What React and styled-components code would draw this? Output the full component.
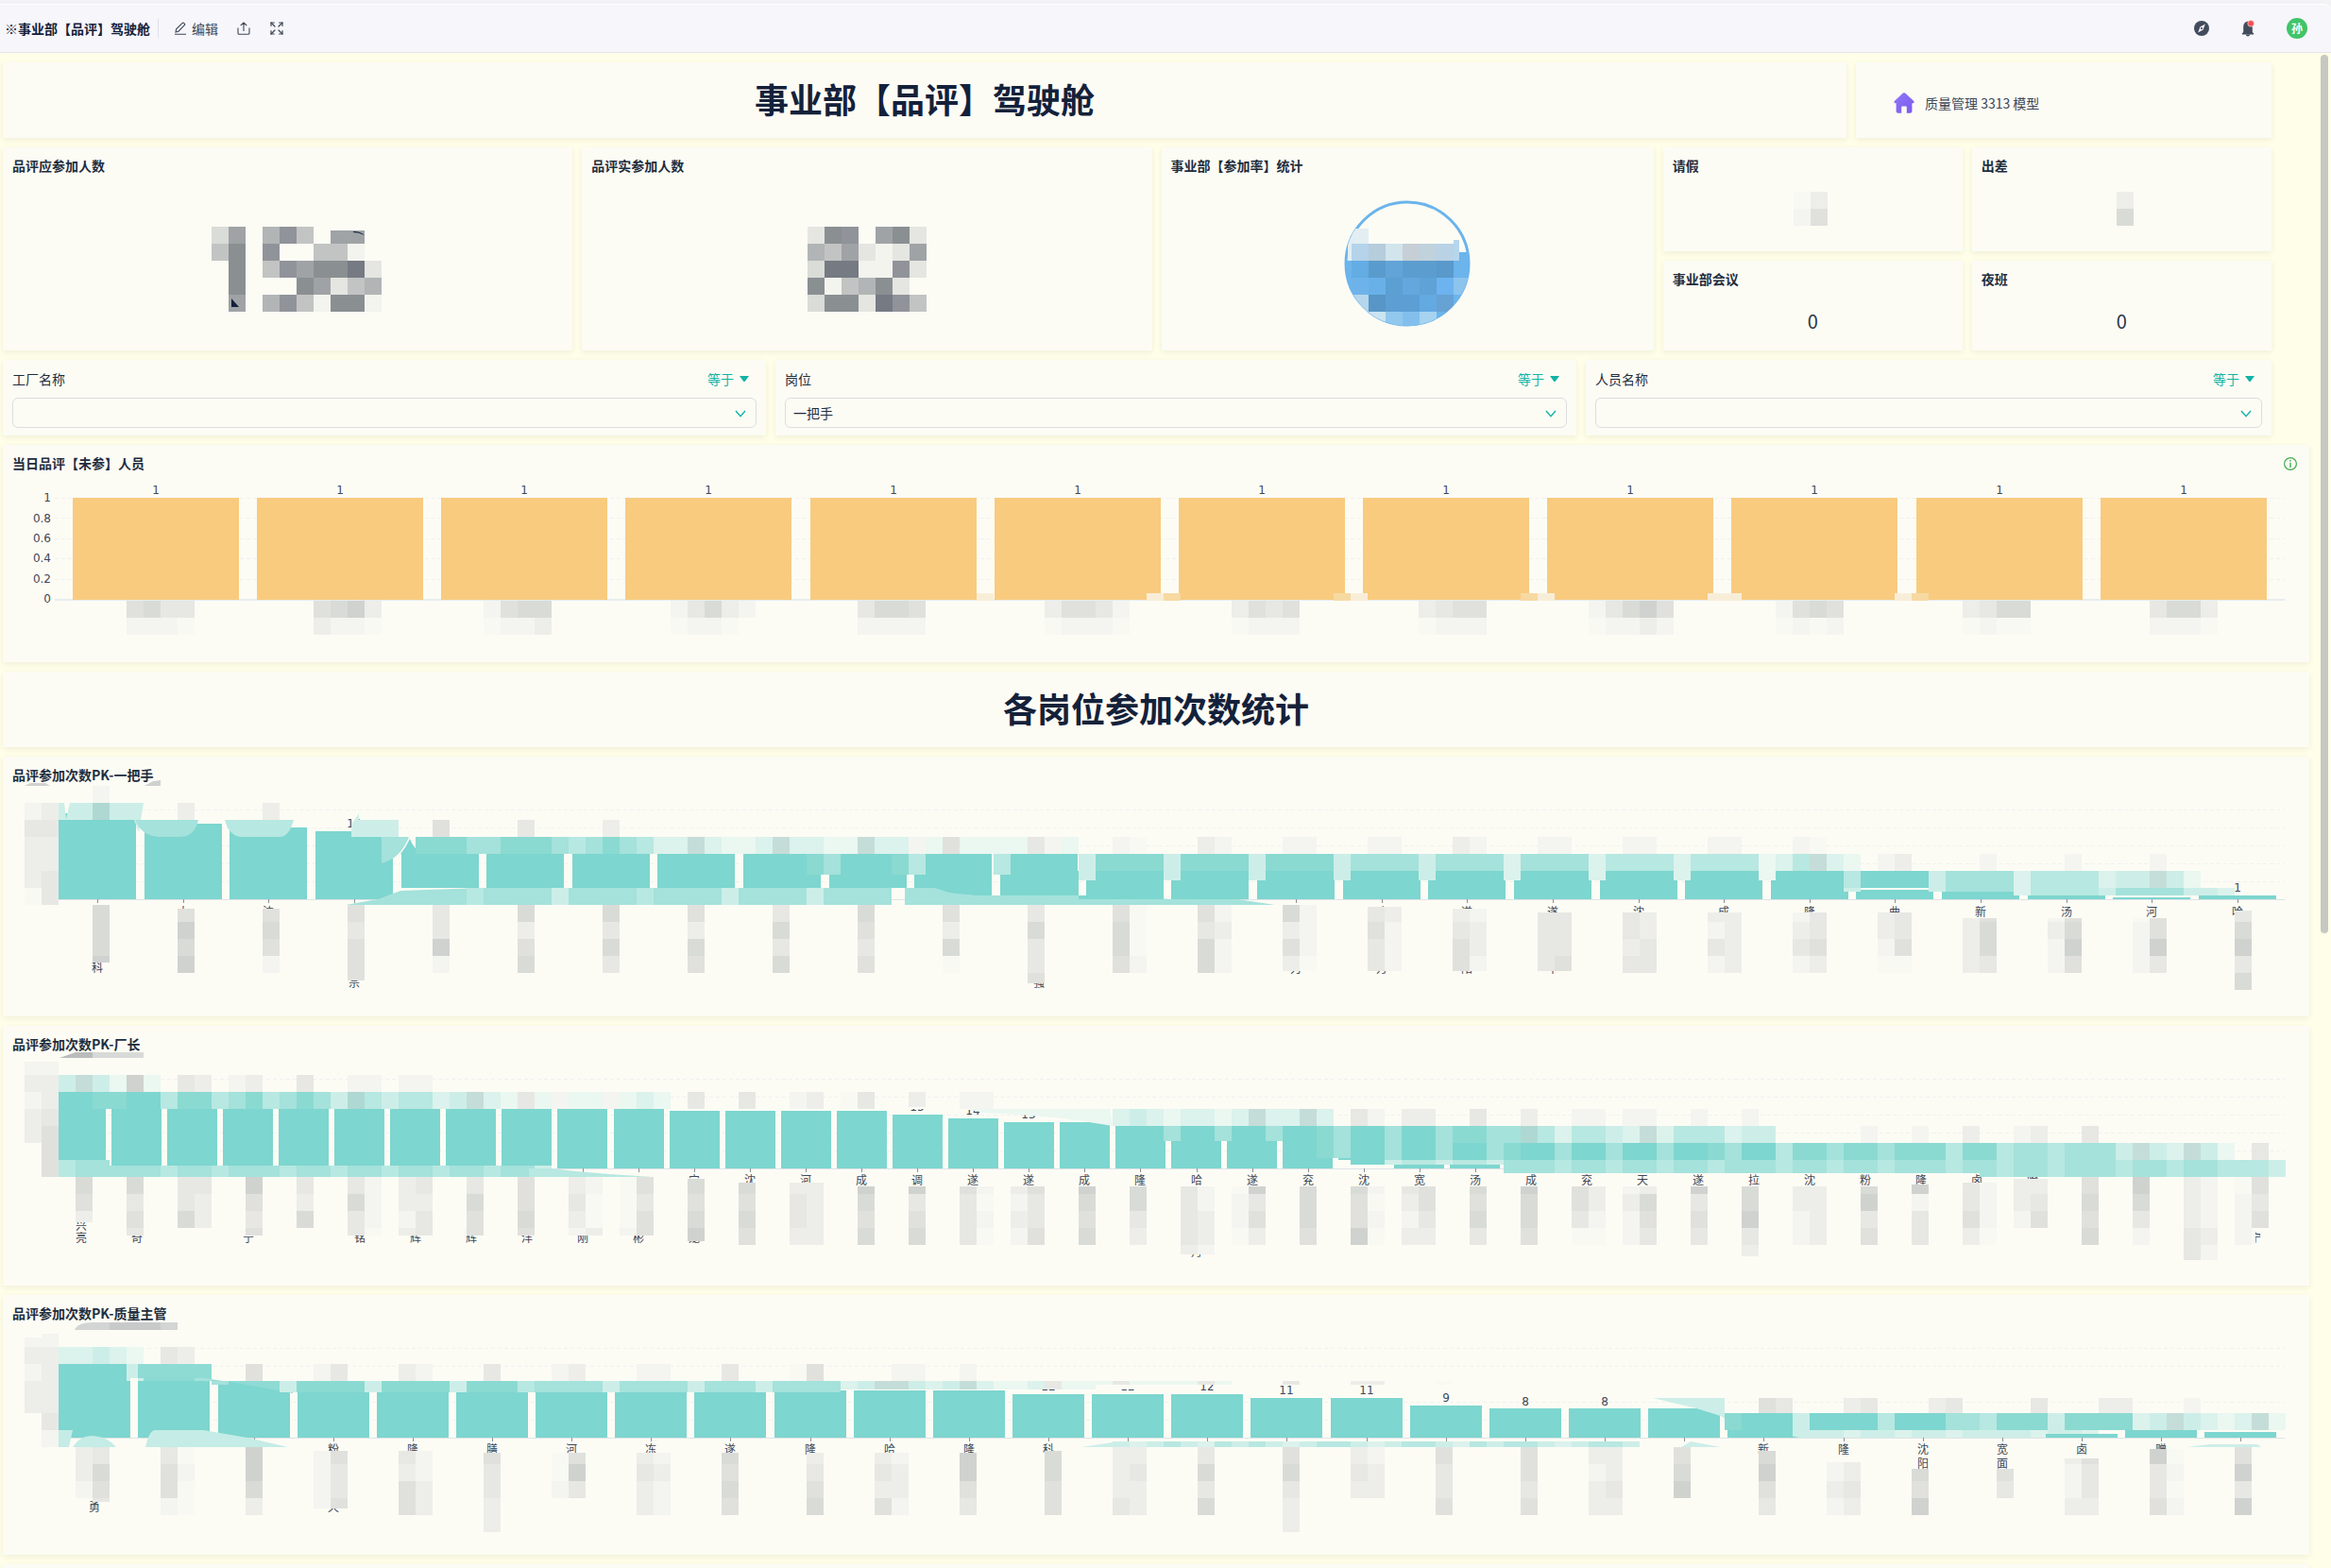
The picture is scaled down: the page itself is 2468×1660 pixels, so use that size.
import React from "react";
import styled, { createGlobalStyle } from "styled-components";
import { Expand } from "lucide-react";

const cjk = '"Noto Sans CJK SC", "Noto Sans", sans-serif';
const chartFont = '"DejaVu Sans", "Noto Sans CJK SC", sans-serif';

const GlobalStyle = createGlobalStyle`
  * { box-sizing: border-box; }
  body { margin: 0; background: #f3f3f5; font-family: ${cjk}; font-size: 14px; line-height: 20px; color: #1f2d3d; }
  h1, h2, h3, p { margin: 0; }
`;

const Page = styled.div`
  display: flex;
  flex-direction: column;
  height: 100vh;
  padding-top: 4px;
`;

const Header = styled.header`
  display: flex;
  align-items: center;
  justify-content: space-between;
  flex: none;
  height: 52px;
  padding: 0 25px 1px 5px;
  background: #f6f6fb;
  border-top: 1px solid #ffffff;
  border-bottom: 1px solid #e3e4ee;
  border-radius: 0 8px 0 0;
`;

const HeaderGroup = styled.div`
  display: flex;
  align-items: center;
  gap: ${(p) => p.$gap}px;
`;

const PageName = styled.h1`
  font-size: 14px;
  line-height: 20px;
  font-weight: 700;
  color: #14213a;
  padding-right: 8px;
  border-right: 1px solid #dfe1e8;
`;

const ToolButton = styled.button`
  display: flex;
  align-items: center;
  gap: 5px;
  padding: 0;
  border: 0;
  background: none;
  font: inherit;
  color: #3d4757;
  cursor: pointer;
`;

const Avatar = styled.span`
  display: grid;
  place-items: center;
  width: 22px;
  height: 22px;
  border-radius: 50%;
  background: #41c46b;
  color: #fff;
  font-size: 12px;
  line-height: 22px;
  font-weight: 700;
`;

const Viewport = styled.div`
  display: flex;
  flex: 1;
  min-height: 0;
  background: #fffee8;
`;

const Board = styled.main`
  display: flex;
  flex-direction: column;
  gap: 10px;
  flex: 1;
  min-width: 0;
  padding: 10px 12px 10px 3px;
  overflow-y: auto;
  scrollbar-width: none;
`;

const ScrollThumb = styled.div`
  flex: none;
  width: 8px;
  height: 58%;
  margin: 2px 3px 0 0;
  border-radius: 4px;
  background: #c6c8c2;
`;

const Row = styled.div`
  display: grid;
  grid-template-columns: ${(p) => p.$columns};
  gap: 10px;
  flex: none;
  margin-right: 40px;
`;

const Card = styled.section`
  display: flex;
  flex-direction: column;
  flex: none;
  min-width: 0;
  padding: 10px;
  min-height: ${(p) => p.$minHeight || 0}px;
  grid-row: ${(p) => (p.$tall ? "span 2" : "auto")};
  background: #fcfcf5;
  box-shadow: 0 2px 6px rgba(60, 50, 20, 0.08);
`;

const Banner = styled(Card)`
  justify-content: center;
  align-items: center;
  height: 80px;
  padding: 7px 10px 12px;
`;

const BannerTitle = styled.h2`
  font-size: 36px;
  line-height: 48px;
  font-weight: 700;
  color: #14213a;
`;

const LinkCard = styled(Card)`
  flex-direction: row;
  align-items: center;
  padding: 6px 40px 0;
`;

const ModelLink = styled.a`
  display: flex;
  align-items: center;
  gap: 11px;
  color: #3d4757;
  text-decoration: none;
`;

const CardHead = styled.div`
  display: flex;
  align-items: flex-start;
  justify-content: space-between;
  height: 20px;
  padding: 0 3px 0 0;
  svg { margin-top: 3px; }
`;

const CardTitle = styled.h3`
  font-size: 14px;
  line-height: 18px;
  font-weight: 700;
  color: #1f2d3d;
`;

const CardBody = styled.div`
  display: flex;
  flex: 1;
  align-items: center;
  justify-content: center;
`;

const Count = styled.p`
  padding-top: 12px;
  font-size: 20px;
  line-height: 28px;
  color: #2b3648;
`;

const FilterCard = styled(Card)`
  gap: 10px;
  padding-bottom: 8px;
`;

const FilterHead = styled.div`
  display: flex;
  justify-content: space-between;
  padding-right: 8px;
`;

const Operator = styled(ToolButton)`
  gap: 6px;
  color: #12b3a6;
`;

const SelectWrap = styled.div`
  position: relative;
  svg { position: absolute; right: 11px; top: 13px; pointer-events: none; }
`;

const Select = styled.select`
  display: block;
  width: 100%;
  height: 32px;
  padding: 0 30px 0 8px;
  border: 1px solid #dcdde0;
  border-radius: 6px;
  background: transparent;
  appearance: none;
  font: inherit;
  color: #1f2d3d;
`;

const ChartSvg = styled.svg`
  display: block;
  width: 100%;
  height: auto;
  overflow: visible;
  font-family: ${chartFont};
  font-size: 12px;
  fill: #3d4757;
`;

const Glyph = styled.svg`
  display: block;
  flex: none;
`;

/* ---------- pixelated overlays ---------- */

const palette = {
  a: "#f9f9f3", b: "#f4f5f0", c: "#edeee9", d: "#e7e8e4", e: "#e0e1dd", f: "#d9dbd7", g: "#d0d2cf",
  t: "#7dd6cf", u: "#8adad2", v: "#a4e2db", w: "#b7e8e1", x: "#cdeee8", y: "#dcf2ec", z: "#ebf7f1",
  m: "#c5ddd8", n: "#afd8d3",
  1: "#f3f4ee", 2: "#e5e6e1", 3: "#d9dcd7", 4: "#c2c4c3", 5: "#b1b5b6", 6: "#9fa3a6", 7: "#91939a", 8: "#8a8f92", 9: "#757a83",
  o: "#f8eed8", p: "#f7d9a2",
};
const CELL = 18;
const colX = (k) => 8 + CELL * k;

function Run({ y, from, cells, h = CELL, x0 }) {
  const left = x0 === undefined ? colX(from) : x0;
  return [...cells].map((c, i) =>
    c === "." ? null : (
      <rect key={i} x={left + i * CELL} y={y} width={CELL} height={h} fill={palette[c]} shapeRendering="crispEdges" />
    )
  );
}

function Stack({ k, rows, top, cells, limit = 260 }) {
  let first = 0;
  while (first < rows.length - 1 && rows[first + 1] <= top) first += 1;
  return [...cells].map((c, i) => {
    const start = i === 0 ? top : rows[first + i];
    const end = Math.min(limit, rows[first + i + 1] ?? rows[first + i] + CELL);
    return (
      <rect key={i} x={colX(k)} y={start} width={CELL} height={Math.max(0, end - start)} fill={palette[c]} shapeRendering="crispEdges" />
    );
  });
}

function Stacks({ rows, items }) {
  return items.map(([k, top, cells, limit], i) => <Stack key={i} k={k} rows={rows} top={top} cells={cells} limit={limit} />);
}

/* ---------- chart parts ---------- */

function Bars({ first, pitch, width, tops, base, fill }) {
  return tops.map((t, i) => {
    const [top, bottom] = Array.isArray(t) ? t : [t, base];
    const left = Math.round(first + i * pitch - width / 2);
    return <rect key={i} x={left} y={top} width={width} height={bottom - top} fill={fill} shapeRendering="crispEdges" />;
  });
}

function Grid({ lines }) {
  return lines.map((y) => (
    <line key={y} x1="58" x2="2419" y1={y} y2={y} stroke="#f1f1f1" strokeDasharray="4 3" shapeRendering="crispEdges" />
  ));
}

function Axis({ y, first, pitch, count }) {
  return (
    <g shapeRendering="crispEdges">
      <rect x="58" y={y} width="2361" height="1" fill="#dfe3e6" />
      {Array.from({ length: count }, (_, i) => (
        <rect key={i} x={Math.round(first + i * pitch)} y={y} width="1" height="4" fill="#8b9098" />
      ))}
    </g>
  );
}

function Labels({ first, pitch, items }) {
  return items.map(([i, text, y], n) => (
    <text key={n} x={Math.round(first + i * pitch)} y={y} textAnchor="middle">{text}</text>
  ));
}

const TEAL = "#7dd6cf";
const BG = "#fcfcf5";

function AbsentChart() {
  const first = 165;
  const pitch = 195.15;
  const names = [
    [7, "efdd", "bbba"], [18, "efgc", "cbba"], [28, "beff", "abbc"], [39, "bdfcb", "abba."], [50, "dffe", "bbbb"],
    [61, "ceedb", "abbba"], [72, "cede", "abbb"], [83, "cdee", "abbb"], [93, "bdfge", "abbcb"], [104, "befe", "abab"],
    [115, "cdff", "abaa"], [126, "dffc", "bbba"],
  ];
  return (
    <ChartSvg viewBox="13 30 2422 190">
      <Grid lines={[56, 77, 99, 120, 142]} />
      <rect x="58" y="163" width="2361" height="2" fill="#e8ecee" />
      <Bars first={first} pitch={pitch} width={176} tops={Array(12).fill(56)} base={164} fill="#f8cb7f" />
      {["1", "0.8", "0.6", "0.4", "0.2", "0"].map((t, i) => (
        <text key={t} x="54" y={[60, 82, 103, 124, 146, 167][i]} textAnchor="end">{t}</text>
      ))}
      <Labels first={first} pitch={pitch} items={Array.from({ length: 12 }, (_, i) => [i, "1", 52])} />
      {[[57, "o"], [67, "op"], [78, "po"], [89, "po"], [100, "oo"], [111, "op"]].map(([k, c]) => (
        <Run key={k} y={157} from={k} cells={c} h={8} />
      ))}
      {names.map(([k, a, b]) => (
        <g key={k}>
          <Run y={165} from={k} cells={a} />
          <Run y={183} from={k} cells={b} />
        </g>
      ))}
    </ChartSvg>
  );
}

function LeaderChart() {
  const first = 103;
  const pitch = 90.64;
  const rows = [31, 49, 67, 85, 103, 121, 139, 157, 175, 193, 211, 229];
  const tops = [60, 71, 75, 79, ...Array(6).fill([103, 139]), [103, 147], [103, 148], ...Array(9).fill(121), 141, 143, 147, 149, 147];
  const stacks = [
    [1, 49, "bdccca"], [2, 49, "cdccdd"], [5, 31, "b"],
    [5, 157, "fffg", 218], [10, 161, "egfg"], [15, 161, "efeb"], [20, 157, "edeee", 237], [25, 157, "ddgb"], [30, 157, "fcef"],
    [35, 157, "fdfd"], [40, 157, "ecfe"], [45, 157, "dfdf"], [50, 157, "fede"], [55, 157, "ecfa"], [60, 157, "dfdde", 240],
    [65, 157, "effe"], [66, 157, "aaab"], [70, 157, "edff"], [71, 157, "bcbb"], [75, 157, "fcec", 227], [76, 157, "bbba", 227],
    [80, 159, "dedd", 227], [81, 159, "cbbb", 227], [85, 161, "cdee", 227], [86, 161, "bccb", 227], [90, 165, "dddd", 227], [91, 165, "ddde", 227],
    [95, 165, "ddcd"], [96, 165, "ccdd"], [100, 165, "cbdb"], [101, 165, "cccc"], [105, 165, "bcdb"], [106, 165, "ddec"],
    [110, 165, "ccba"], [111, 165, "ddea"], [115, 171, "cccc"], [116, 171, "effd"], [120, 171, "bcbb"], [121, 171, "efge"],
    [125, 171, "abbb"], [126, 171, "eegd"], [131, 163, "dfgdf"],
  ];
  return (
    <ChartSvg viewBox="13 30 2422 235">
      <Grid lines={[56, 75, 94, 113, 132]} />
      <Axis y={151} first={first} pitch={pitch} count={26} />
      <Bars first={first} pitch={pitch} width={82} tops={tops} base={151} fill={TEAL} />
      <path d="M26 31 L32 28 H48 L53 31Z M153 31 L162 26 L170 25 V31Z" fill="#cfd1d1" />
      <Labels first={first} pitch={pitch} items={[
        [1, "太", 169], [2, "沈", 169],
        [15, "隆", 169], [16, "遂", 169], [17, "遂", 169], [18, "沈", 169], [19, "成", 169], [20, "隆", 169], [21, "曲", 169],
        [22, "新", 169], [23, "汤", 169], [24, "河", 169], [25, "哈", 169], [25, "1", 143], [3, "18", 75],
        [0, "科", 228], [3, "宗", 244], [11, "强", 244], [14, "力", 229], [15, "万", 229], [16, "阳", 229], [17, "中", 229],
      ]} />
      <path d="M62 49 H68 L70 66 L74 49 H152 L147 80 L142 67 H62Z" fill={palette.x} />
      <rect x="98" y="49" width="18" height="18" fill={palette.n} />
      <path d="M143 67 H210 Q206 85 190 85 H168 Q150 84 143 67Z" fill={palette.v} />
      <path d="M238 67 H311 Q306 85 296 85 H258 Q243 86 238 67Z" fill={palette.w} />
      <path d="M372 85 V72 L380 60 V67 H422 V85Z" fill={palette.x} />
      <path d="M404 85 H433 Q424 108 404 113Z" fill={palette.v} />
      <path d="M424 103 Q430 96 434 87 Q440 103 454 103Z" fill={TEAL} />
      <Run y={49} from={10} cells="c....c" />
      <Run y={67} from={25} cells="e....d....c" />
      <Run y={85} from={24} cells="uuuvvuuuvwvuvwyymyzzymyyzzmyybzezzzzdbz..ba...cb...bb...bb...cb...bb...bb...bb...ba" />
      <Run y={103} from={63} cells="xuuuuxuuuuxuuuuxvvvvxvvvvyvvvvywwwwywwwwzywmyz.bc....b....b....b" />
      <Run y={103} from={47} cells="uv...uw....w" h={22} />
      <Run y={121} from={63} cells="x....x....x....x....x....y....y....y....z" h={10} />
      <Run y={121} from={108} cells="wttttxvvvvywwwwyxxmxz" />
      <Run y={139} from={108} cells="x....xvvvv" h={4} />
      <Run y={139} from={118} cells="ywwww" h={8} />
      <Run y={139} from={123} cells="xvvvvxxy" h={8} />
      <path d="M366 157 L400 151 L424 142 L508 139 V157Z" fill={palette.v} />
      <Run y={139} from={27} cells="wvvvvxvvvvwvvvvxvvvvxvvvv" />
      <path d="M958 139 H990 L1005 144 L1035 147 H1160 L1200 151 H1310 L1350 157 H958Z" fill={palette.v} />
      <path d="M994 139 H1040 V147 L1012 145Z M1140 121 H1142 V151 H1240 L1170 147 H1140Z" fill={TEAL} />
      <Stacks rows={rows} items={stacks} />
    </ChartSvg>
  );
}

function ManagerChart() {
  const first = 85.5;
  const pitch = 59.05;
  const rows = [34, 52, 70, 88, 106, 124, 142, 160, 178, 196, 214, 232];
  const tops = [
    [70, 151], [70, 151], ...Array(8).fill(88), 87, 90, 90, 90, 90, 94, 98, 102, 102, 106, 106, 106, 106, [106, 142], 146, 146, 147, 149,
  ];
  const stacks = [
    [1, 38, "bcbcc"], [2, 38, "bccdeee"],
    [4, 160, "fec", 208], [7, 160, "fded", 222], [10, 160, "ddf"], [11, 160, "dcc"], [14, 160, "gede", 222], [17, 160, "dcf"],
    [20, 160, "dfdd", 222], [21, 160, "bbba", 222], [23, 160, "ccbc", 222], [24, 160, "dcdd", 222], [27, 160, "dfee", 222], [30, 160, "eefe", 222],
    [33, 160, "cdcb", 222], [34, 160, "baac", 222], [36, 160, "aaab", 222], [37, 160, "edee", 222], [40, 162, "fefg", 228], [43, 166, "fefe"],
    [46, 166, "cddc"], [47, 166, "cccc"], [50, 170, "gfef"], [53, 170, "gdef"], [56, 170, "eddd"], [57, 170, "baba"],
    [59, 170, "cbcb"], [60, 170, "edde"], [63, 170, "gfef"], [66, 170, "ffdc"],
    [69, 170, "ddddc", 242], [70, 170, "bbccb", 242], [72, 170, "abba"], [73, 170, "gdec"], [76, 170, "fffe"], [79, 170, "feeg"],
    [80, 170, "baba"], [82, 170, "dcbc"], [83, 170, "eedc"], [86, 170, "fefd"], [89, 170, "gffe"], [92, 170, "eeda"],
    [93, 170, "ccba"], [95, 170, "bcbb"], [96, 170, "cfed"], [99, 170, "gded"], [102, 170, "ffgdc", 244], [105, 170, "ccbb"],
    [106, 170, "cccc"], [109, 170, "fgde"], [112, 168, "gbdd"], [115, 166, "ddec"], [116, 166, "bbba"], [118, 162, "ccb"],
    [119, 162, "cde"], [122, 160, "efef"], [125, 160, "gfdb"], [128, 160, "cccdd", 248], [129, 160, "bbbcb", 248], [131, 160, "abbb"],
    [132, 160, "ede"],
  ];
  return (
    <ChartSvg viewBox="13 30 2422 235">
      <Grid lines={[56, 75, 94, 113, 132]} />
      <Axis y={151} first={first} pitch={pitch} count={40} />
      <Bars first={first} pitch={pitch} width={53} tops={tops} base={151} fill={TEAL} />
      <path d="M63 34 L80 28 H98 V34Z" fill="#b9bcbb" />
      <path d="M98 28 H152 V34 H98Z" fill="#d8dad8" />
      <Labels first={first} pitch={pitch} items={[
        [11, "宁", 168], [12, "沈", 168], [13, "河", 168], [14, "成", 168], [15, "调", 168], [16, "遂", 168], [17, "遂", 168],
        [18, "成", 168], [19, "隆", 168], [20, "哈", 168], [21, "遂", 168], [22, "兖", 168], [23, "沈", 168], [24, "宽", 168],
        [25, "汤", 168], [26, "成", 168], [27, "兖", 168], [28, "天", 168], [29, "遂", 168], [30, "拉", 168], [31, "沈", 168],
        [32, "粉", 168], [33, "隆", 168], [34, "卤", 168], [35, "哈", 168],
        [0, "兴", 216], [0, "亮", 229], [1, "奇", 229], [3, "宁", 229], [5, "铭", 229], [6, "辉", 229], [7, "辉", 229],
        [8, "洋", 229], [9, "刚", 229], [10, "彬", 229], [11, "龙", 229], [20, "丹", 244], [39, "宁", 229],
        [15, "15", 90], [16, "14", 94], [17, "13", 98],
      ]} />
      <rect x="955" y="76" width="34" height="10" fill={BG} />
      <rect x="1014" y="80" width="34" height="9" fill={BG} />
      <rect x="1073" y="84" width="34" height="10" fill={BG} />
      {[1, 3, 5, 6, 7, 8, 9, 10].map((i) => (
        <rect key={i} x={Math.round(first + i * pitch) - 8} y="216" width="16" height="6" fill={palette.a} />
      ))}
      <rect x="2376" y="214" width="12" height="18" fill={palette.a} />
      <Run y={52} from={3} cells="xmxz" />
      <Run y={52} from={7} cells="gz.dc.bc..d..bb.bb" />
      <Run y={70} from={3} cells="ttuuttwuuwvuwvuvxnwxwwyxmyzdzbzzbzyz.d..d..bc.ad..c..bb" />
      <rect x="962" y="86" width="18" height="2" fill={BG} />
      <path d="M1025 88 H1175 L1178 106 Q1110 94 1040 92Z" fill={palette.z} />
      <Run y={88} from={65} cells="yxyzyyzymyymy.db.cc..d..c..bb.bb..b..b" />
      <Run y={106} from={68} cells="v..v..v..uv" h={16} />
      <Run y={106} from={79} cells="ttvttvuuvvnwywwxymywwwyxx.....b..b..c..bc..d" />
      <Run y={122} from={77} cells="uv" />
      <Run y={124} from={79} cells="ttvttvttvuttvttvttvttuvttwuuvuuvuuuwuuwvvwvvvxmxymxz.d" />
      <Run y={142} from={79} cells="ttxwwxwwx" h={5} />
      <Run y={142} from={88} cells="vvvwvvwvvwvvwvvvwvvwvvwvvvwv" h={14} />
      <Run y={142} from={116} cells="vwvvwvvvwvvwvvwwwx" />
      <Run y={142} from={3} cells="wvv" />
      <Run y={148} from={6} cells="vvvwvvwvvvwvvwvvwvvwvvwvvx" h={12} />
      <path d="M584 151 L610 154 L645 157 L690 160 H560 V151Z" fill={palette.w} />
      <Stacks rows={rows} items={stacks} />
    </ChartSvg>
  );
}

function QualityChart() {
  const first = 100.2;
  const pitch = 84.15;
  const rows = [37, 55, 73, 91, 109, 125, 143, 161, 179, 197, 215, 233];
  const tops = [
    73, 73, 91, 103, 103, 103, 102, 102, 101, 101, 101, 101, 105, 105, 105, 109, 109, 117, 120, 120, 120, 127, 149, 149, 149, 147, 143, 145,
  ];
  const stacks = [
    [1, 45, "bcbcc"], [2, 41, "bccccdb"],
    [4, 161, "ccb"], [5, 161, "dfed", 219], [9, 161, "deeb"], [10, 161, "abaa"], [14, 161, "ggfc"], [18, 165, "bbbb", 226],
    [19, 165, "edde", 226], [23, 165, "dcee"], [24, 165, "bbcc"], [28, 167, "eddcc"], [32, 167, "aab"], [33, 167, "egd"],
    [37, 167, "cdcc"], [38, 167, "bcbb"], [42, 167, "fefe"], [47, 167, "cdef"], [51, 167, "cdce"], [52, 167, "bccb"],
    [56, 167, "gged"], [61, 165, "ffee"], [65, 161, "cccd"], [66, 161, "cdcc"], [70, 161, "dfdf"], [75, 161, "efdcc"],
    [79, 161, "cdc"], [80, 161, "bcc"], [84, 161, "edde"], [89, 161, "eede"], [93, 161, "cbcc"], [94, 161, "ccdc"],
    [98, 161, "efg"], [103, 165, "fged"], [107, 177, "bbcb"], [108, 177, "ccdc"], [112, 184, "feg"], [117, 184, "ed"],
    [121, 173, "cbbc"], [122, 173, "eddc"], [126, 163, "gdde"], [127, 163, "abab"], [131, 161, "egdg"],
  ];
  return (
    <ChartSvg viewBox="13 30 2422 235">
      <Grid lines={[56, 75, 113, 132]} />
      <Axis y={151} first={first} pitch={pitch} count={28} />
      <Bars first={first} pitch={pitch} width={76} tops={tops} base={151} fill={TEAL} />
      <path d="M79 37 Q82 29 98 29 H188 V37Z" fill="#d3d5d4" />
      <path d="M116 29 H170 V37 H116Z" fill="#c8caca" />
      <Labels first={first} pitch={pitch} items={[
        [3, "粉", 168], [4, "隆", 168], [5, "膳", 168], [6, "河", 168], [7, "冻", 168], [8, "遂", 168], [9, "隆", 168],
        [10, "哈", 168], [11, "隆", 168], [12, "科", 168], [21, "新", 168], [22, "隆", 168], [23, "沈", 168], [23, "阳", 183],
        [24, "宽", 168], [24, "面", 183], [25, "卤", 168], [26, "赠", 168], [0, "勇", 229], [3, "天", 229],
        [12, "12", 101], [13, "12", 101], [14, "12", 101], [15, "11", 105], [16, "11", 105], [17, "9", 113], [18, "8", 117], [19, "8", 117],
      ]} />
      <rect x="1098" y="91" width="36" height="9" fill={BG} />
      <rect x="1182" y="91" width="36" height="9" fill={BG} />
      <Run y={55} from={3} cells="yyxyz.dc" />
      <Run y={73} from={3} cells="ttttxuuuv" />
      <path d="M146 88 H215 L250 93 L310 104 V91 H224 V73 H146Z" fill="#8edbd4" />
      <rect x="138" y="88" width="8" height="63" fill={BG} />
      <Run y={73} from={14} cells="e...bd...cb...d...bc...bb...d...ae....bb..b" />
      <Run y={91} from={16} cells="xuuuuxuuuuxuuuwvvvvxvvvvxvvvxvvvv" h={12} />
      <Run y={91} from={49} cells="yxmmxyxmyzzydzz" h={9} />
      <Run y={91} from={64} cells="zdzzzzdz...d...cc...a" h={4} />
      <Run y={91} from={12} cells="v" h={4} />
      <path d="M1750 109 H1826 V125 H1850 V150 L1822 128 L1796 120Z" fill={palette.x} />
      <Run y={109} from={103} cells="ed...cd...cd....d...cc...b" h={16} />
      <Run y={125} from={101} cells="utttxttttwtttvvwuuuxuuuuyxmxyzymz" />
      <Run y={143} from={105} cells="xxxyxxyxxyxxxxyxxy" h={8} />
      <Bars first={first + 25 * pitch} pitch={pitch} width={76} tops={[147, 143, 145]} base={151} fill={TEAL} />
      <path d="M1866 143 L1905 151 H1830 V143Z" fill={TEAL} />
      <path d="M62 143 H77 L73 161 H62Z M77 161 Q84 149 98 149 Q114 150 123 161Z M154 161 Q158 143 164 143 H215 L262 151 L305 161Z" fill="#c5ece6" />
      <path d="M1145 161 L1178 156 V161Z" fill={palette.x} />
      <Run y={155} from={65} cells="xyxwxywxwxyxwwxyxwwxywxwwxyxwwx" h={6} />
      <path d="M1790 155 L1822 161 H1780Z M2315 161 L2340 158 H2390 L2394 161Z" fill={palette.x} />
      <Stacks rows={rows} items={stacks} />
    </ChartSvg>
  );
}

/* ---------- indicator drawings ---------- */

function PixelNumber({ lines, pad }) {
  return (
    <Glyph width={lines[0].length * CELL + pad} height="112" aria-hidden="true">
      {lines.map((cells, i) => <Run key={i} y={22 + i * CELL} x0={pad} cells={cells} />)}
      {pad > 0 && (
        <>
          <rect x="144" y="22" width="36" height="4" fill={BG} />
          <path d="M39 98 L47 107 H39Z M168 27 Q176 27 180 31 Q174 28 168 28Z" fill="#14213a" />
        </>
      )}
    </Glyph>
  );
}

const gaugeRows = [
  [8, 56, ["#b5d3ea", "#b6cddb", "#d2e4ec", "#c6cfd5", "#c0d2dc", "#bad2e6"]],
  [8, 74, ["#63ace4", "#5a9bcd", "#62a3d8", "#5c9dd0", "#5c9dd0", "#5999cb"]],
  [8, 92, ["#6db3ea", "#69b0e8", "#5b9fd3", "#64a7de", "#5fa2d5", "#6db3f0", "#8cc4ee"]],
  [8, 110, ["#b5d6ec", "#5796c6", "#5d9fd3", "#5b9fd4", "#63a9e2", "#67a2d4"]],
  [26, 128, ["#cbe4f2", "#92c8ee", "#82bfec", "#a5d3f0"]],
];

function Gauge() {
  return (
    <Glyph width="134" height="144" aria-hidden="true">
      <clipPath id="bowl"><circle cx="67" cy="77" r="66" /></clipPath>
      <circle cx="67" cy="77" r="65" fill="none" stroke="#6bb4ec" strokeWidth="3" />
      <g clipPath="url(#bowl)">
        <rect x="0" y="74" width="134" height="70" fill="#6bb4ec" />
        <rect x="122" y="65" width="12" height="10" fill="#6bb4ec" />
        <rect x="4" y="40" width="22" height="34" fill="#e3eef2" />
        {gaugeRows.map(([x, y, fills]) =>
          fills.map((f, i) => <rect key={`${y}-${i}`} x={x + i * CELL} y={y} width={CELL} height={CELL} fill={f} />)
        )}
        <rect x="116" y="52" width="6" height="22" fill="#b5d6ec" />
      </g>
    </Glyph>
  );
}

/* ---------- icons ---------- */

const EditIcon = () => (
  <Glyph width="14" height="14" viewBox="0 0 14 14" fill="none" stroke="#3d4757" strokeWidth="1.1">
    <path d="M2 11 L2.6 7.8 L9.4 1.2 Q10 .8 10.6 1.3 L11.6 2.3 Q12 2.9 11.5 3.5 L4.9 10.2Z M1 13.2 H13" />
  </Glyph>
);
const ShareIcon = () => (
  <Glyph width="14" height="14" viewBox="0 0 14 14" fill="none" stroke="#3d4757" strokeWidth="1.1">
    <path d="M1 6.5 V12 Q1 13.3 2.3 13.3 H11.7 Q13 13.3 13 12 V6.5 M7 10 V1 M3.8 4 L7 .9 L10.2 4" />
  </Glyph>
);
const CompassIcon = () => (
  <Glyph width="16" height="16" viewBox="0 0 16 16">
    <circle cx="8" cy="8" r="8" fill="#434c5c" />
    <path d="M11.8 3.6 L9.6 9.4 L4.2 12.4 L6.4 6.6Z" fill="#f6f6fb" />
    <circle cx="8" cy="8" r="1.1" fill="#434c5c" />
  </Glyph>
);
const BellIcon = () => (
  <Glyph width="16" height="18" viewBox="0 0 16 18">
    <path d="M8 1.5 Q12.8 2.4 12.8 7.5 V13 L14.2 14.6 V15.4 H1.8 V14.6 L3.2 13 V7.5 Q3.2 2.4 8 1.5Z M5.8 15.8 H10.2 Q9.8 17.6 8 17.6 Q6.2 17.6 5.8 15.8Z" fill="#434c5c" />
    <circle cx="11.2" cy="3.8" r="3.4" fill="#f9504f" stroke="#f6f6fb" strokeWidth=".6" />
  </Glyph>
);
const HouseIcon = () => (
  <Glyph width="22" height="22" viewBox="0 0 22 22">
    <defs>
      <linearGradient id="roof" x1="0" y1="0" x2="1" y2="1">
        <stop offset="0" stopColor="#9178fb" />
        <stop offset="1" stopColor="#7c58ea" />
      </linearGradient>
    </defs>
    <path d="M9.8 .6 Q11 -.3 12.2 .6 L21.2 9 Q22.2 11 20.5 11.2 H19.4 V19.8 Q19.4 21.8 17.4 21.8 H13.8 V15.4 Q13.8 14.4 12.8 14.4 H9.2 Q8.2 14.4 8.2 15.4 V21.8 H4.6 Q2.6 21.8 2.6 19.8 V11.2 H1.5 Q-.2 11 .8 9Z" fill="url(#roof)" />
  </Glyph>
);
const InfoIcon = () => (
  <Glyph width="14" height="14" viewBox="0 0 14 14">
    <circle cx="7" cy="7" r="6.4" fill="none" stroke="#3fae4f" strokeWidth="1.2" />
    <path d="M6.3 3 H7.7 V4.4 H6.3Z M6.3 5.8 H7.7 V11 H6.3Z" fill="#3fae4f" />
  </Glyph>
);

function Filter({ id, label, value }) {
  return (
    <FilterCard>
      <FilterHead>
        <label htmlFor={id}>{label}</label>
        <Operator type="button">
          等于
          <Glyph width="10" height="6"><path d="M0 0 H10 L6 5.4 Q5 6.4 4 5.4Z" fill="#12b3a6" /></Glyph>
        </Operator>
      </FilterHead>
      <SelectWrap>
        <Select id={id} defaultValue={value}>
          <option value={value}>{value}</option>
        </Select>
        <svg width="12" height="8" fill="none" stroke="#12b3a6" strokeWidth="1.4"><path d="M1 1 L6 6.6 L11 1" /></svg>
      </SelectWrap>
    </FilterCard>
  );
}

function Indicator({ title, tall, children }) {
  return (
    <Card $tall={tall}>
      <CardHead><CardTitle>{title}</CardTitle></CardHead>
      <CardBody>{children}</CardBody>
    </Card>
  );
}

function ChartCard({ title, info, children }) {
  return (
    <Card>
      <CardHead>
        <CardTitle>{title}</CardTitle>
        {info && <InfoIcon />}
      </CardHead>
      {children}
    </Card>
  );
}

const KpiRow = styled(Row)`
  grid-template-rows: 110px 95px;
`;

export default function App() {
  return (
    <Page>
      <GlobalStyle />
      <Header>
        <HeaderGroup $gap={16}>
          <PageName>※事业部【品评】驾驶舱</PageName>
          <HeaderGroup $gap={20}>
            <ToolButton type="button"><EditIcon />编辑</ToolButton>
            <ToolButton type="button"><ShareIcon /></ToolButton>
            <ToolButton type="button"><Expand size={16} strokeWidth={1.8} /></ToolButton>
          </HeaderGroup>
        </HeaderGroup>
        <HeaderGroup $gap={33}>
          <CompassIcon />
          <BellIcon />
          <Avatar>孙</Avatar>
        </HeaderGroup>
      </Header>
      <Viewport>
        <Board>
          <Row $columns="1952fr 440fr">
            <Banner><BannerTitle>事业部【品评】驾驶舱</BannerTitle></Banner>
            <LinkCard>
              <ModelLink href="#model"><HouseIcon />质量管理 3313 模型</ModelLink>
            </LinkCard>
          </Row>
          <KpiRow $columns="603fr 603fr 521fr 317fr 317fr">
            <Indicator title="品评应参加人数" tall>
              <PixelNumber pad={18} lines={["36.574.66.", "48.7..441.", ".8.4768892", ".8...86245", ".6.5741881"]} />
            </Indicator>
            <Indicator title="品评实参加人数" tall>
              <PixelNumber pad={0} lines={["287.682", "5462126", "3991172", "814582.", "3882974"]} />
            </Indicator>
            <Indicator title="事业部【参加率】统计" tall><Gauge /></Indicator>
            <Indicator title="请假">
              <Glyph width="40" height="36"><Run y={0} x0={0} cells="ac" /><Run y={18} x0={0} cells="be" /></Glyph>
            </Indicator>
            <Indicator title="出差">
              <Glyph width="26" height="36"><Run y={0} x0={8} cells="c" /><Run y={18} x0={8} cells="f" /></Glyph>
            </Indicator>
            <Indicator title="事业部会议"><Count>0</Count></Indicator>
            <Indicator title="夜班"><Count>0</Count></Indicator>
          </KpiRow>
          <Row $columns="808fr 848fr 726fr">
            <Filter id="factory" label="工厂名称" value="" />
            <Filter id="post" label="岗位" value="一把手" />
            <Filter id="person" label="人员名称" value="" />
          </Row>
          <ChartCard title="当日品评【未参】人员" info><AbsentChart /></ChartCard>
          <Banner><BannerTitle>各岗位参加次数统计</BannerTitle></Banner>
          <ChartCard title="品评参加次数PK-一把手"><LeaderChart /></ChartCard>
          <ChartCard title="品评参加次数PK-厂长"><ManagerChart /></ChartCard>
          <ChartCard title="品评参加次数PK-质量主管"><QualityChart /></ChartCard>
          <Card $minHeight={80} />
        </Board>
        <ScrollThumb />
      </Viewport>
    </Page>
  );
}
